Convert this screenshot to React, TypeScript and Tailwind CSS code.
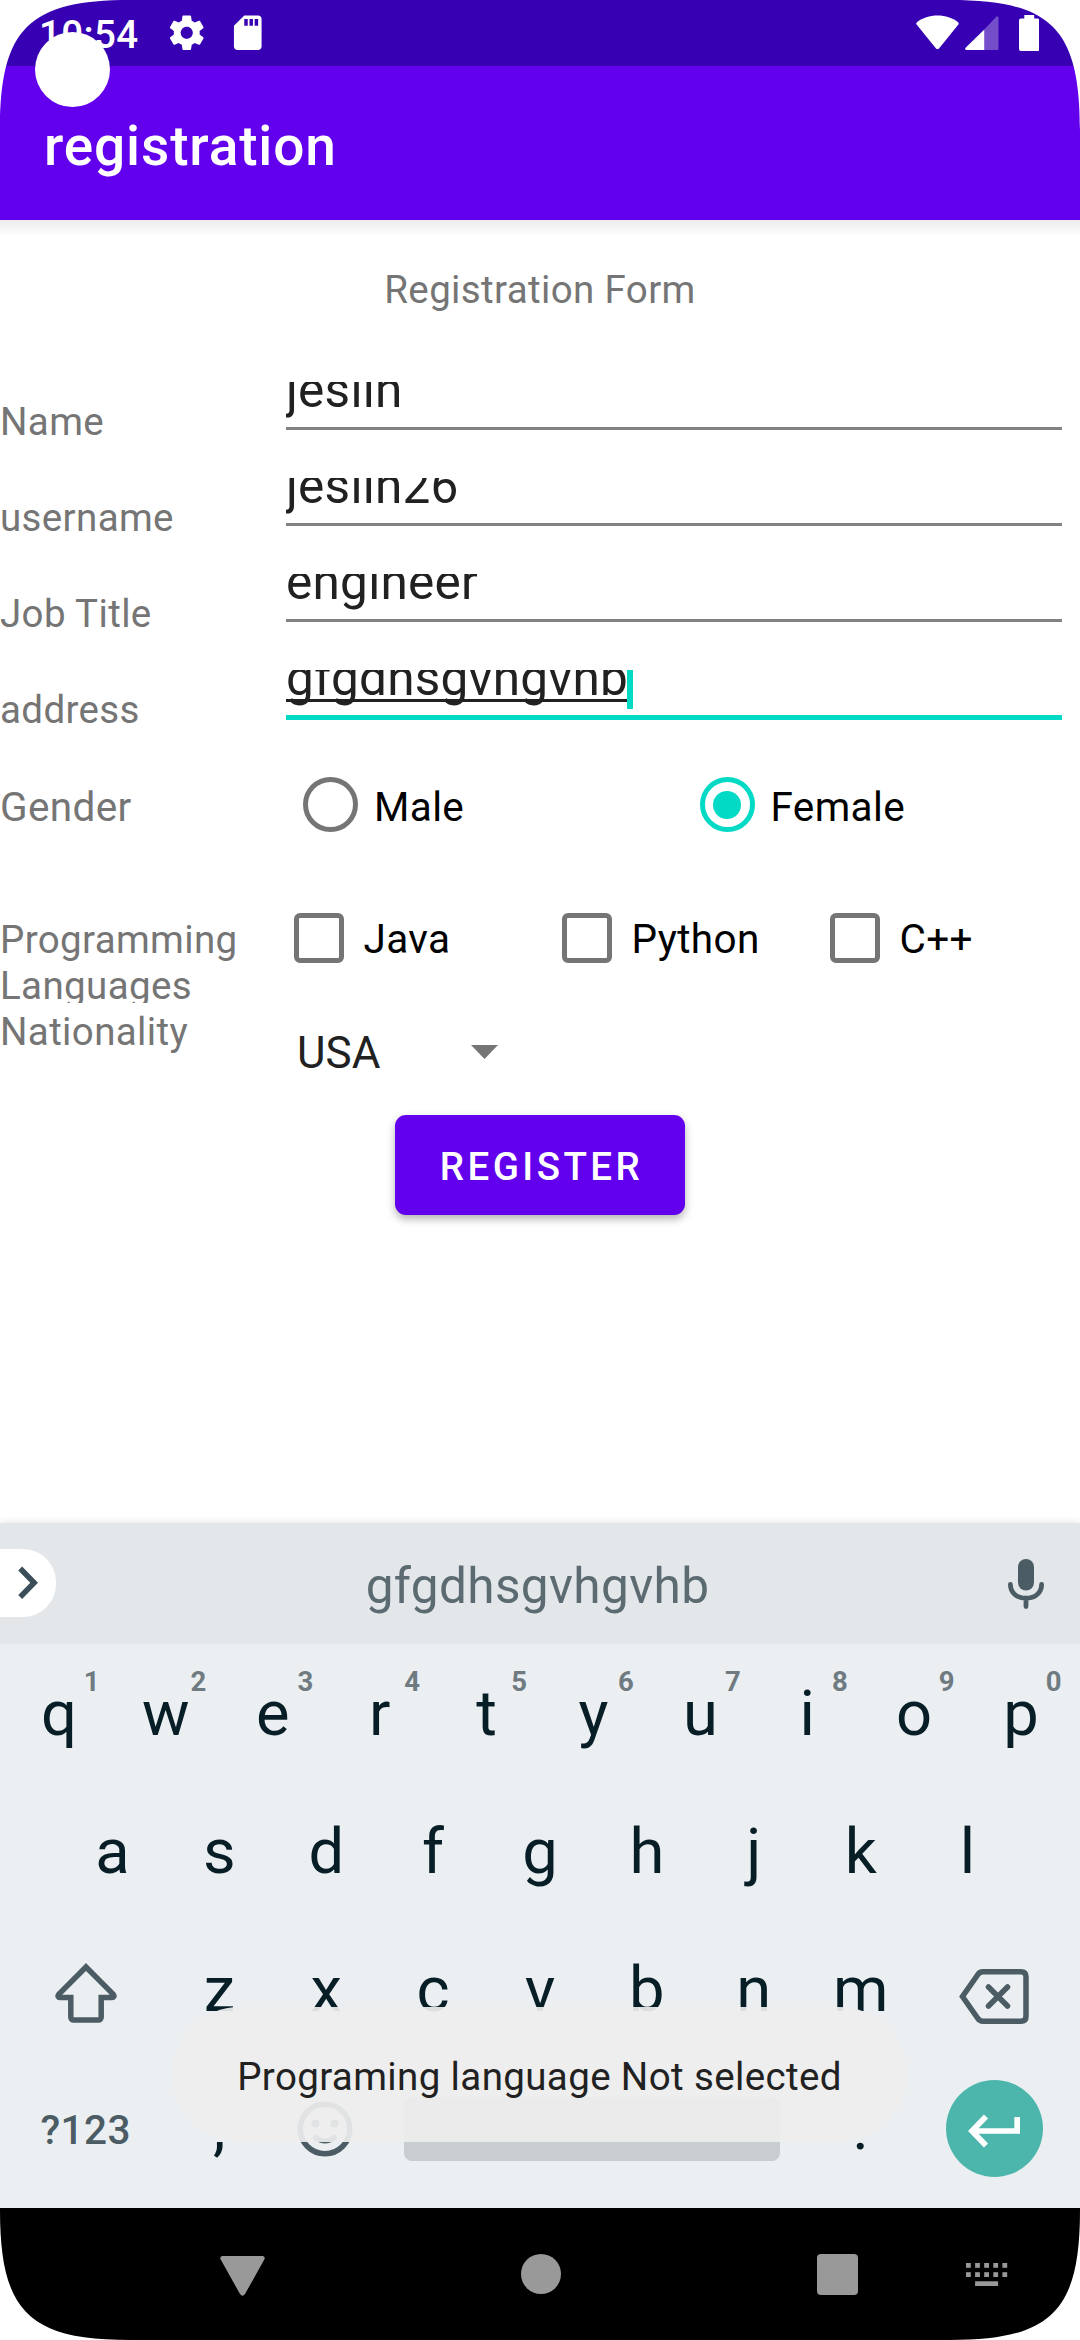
import React from "react";

function Corner({ className }: { className: string }) {
  return (
    <svg viewBox="0 0 130 130" className={"pointer-events-none absolute z-30 h-[130px] w-[130px] " + className}>
      <path d="M0 0V130C0 28.7 28.7 0 130 0Z" fill="#fff" />
    </svg>
  );
}

function StatusBar() {
  return (
    <header className="flex h-[66px] shrink-0 items-center bg-[#3700b3] text-white">
      <span className="mt-[3px] ml-[39px] w-[127px] text-[38.5px] leading-[46px] font-medium">10:54</span>
      <svg viewBox="0 0 24 24" className="h-[41.5px] w-[41.5px]" fill="currentColor">
        <path d="M19.43 12.98c.04-.32.07-.64.07-.98s-.03-.66-.07-.98l2.11-1.65c.19-.15.24-.42.12-.64l-2-3.46c-.12-.22-.39-.3-.61-.22l-2.49 1c-.52-.4-1.08-.73-1.69-.98l-.38-2.65C14.46 2.18 14.25 2 14 2h-4c-.25 0-.46.18-.49.42l-.38 2.65c-.61.25-1.17.59-1.69.98l-2.49-1c-.23-.09-.49 0-.61.22l-2 3.46c-.13.22-.07.49.12.64l2.11 1.65c-.04.32-.07.65-.07.98s.03.66.07.98l-2.11 1.65c-.19.15-.24.42-.12.64l2 3.46c.12.22.39.3.61.22l2.49-1c.52.4 1.08.73 1.69.98l.38 2.65c.03.24.24.42.49.42h4c.25 0 .46-.18.49-.42l.38-2.65c.61-.25 1.17-.59 1.69-.98l2.49 1c.23.09.49 0 .61-.22l2-3.46c.12-.22.07-.49-.12-.64l-2.11-1.65zM12 15.5c-1.93 0-3.5-1.57-3.5-3.5s1.57-3.5 3.5-3.5 3.5 1.57 3.5 3.5-1.57 3.5-3.5 3.5z" />
      </svg>
      <svg viewBox="0 0 24 24" className="ml-[19px] h-[41.5px] w-[41.5px]" fill="currentColor">
        <path d="M18 2h-8L4.02 8 4 20c0 1.1.9 2 2 2h12c1.1 0 2-.9 2-2V4c0-1.1-.9-2-2-2zm-6 6h-2V4h2v4zm3 0h-2V4h2v4zm3 0h-2V4h2v4z" />
      </svg>
      <div className="mr-[41px] ml-auto flex items-center">
        <svg viewBox="0 0 43 36" className="h-[36px] w-[43px]" fill="currentColor">
          <path d="M21.5 0.5C13.5 0.5 6.5 3 1.2 7C0.2 7.8 0 8.8 0.8 9.8L19.8 33.2C20.8 34.4 22.2 34.4 23.2 33.2L42.2 9.8C43 8.8 42.8 7.8 41.8 7C36.5 3 29.5 0.5 21.5 0.5Z" />
        </svg>
        <svg viewBox="0 0 34 36" className="ml-[5.5px] h-[36px] w-[34px]" fill="currentColor">
          <path d="M19.3 14.5V35H1.5C0 35 -0.3 33.6 0.6 32.7Z" />
          <path d="M19.3 14.5V35H32C33 35 33.5 34.5 33.5 33.5V3C33.5 1.6 31.9 1.2 31 2.1Z" opacity=".3" />
        </svg>
        <svg viewBox="0 0 20.5 36" className="ml-[20px] h-[36px] w-[20.5px]" fill="currentColor">
          <path d="M5.3 0H15.2V3.6H18.5Q20.5 3.6 20.5 5.6V34Q20.5 36 18.5 36H2Q0 36 0 34V5.6Q0 3.6 2 3.6H5.3Z" />
        </svg>
      </div>
    </header>
  );
}

const fields = [
  { label: "Name", value: "jeslin", active: false },
  { label: "username", value: "jeslin26", active: false },
  { label: "Job Title", value: "engineer", active: false },
  { label: "address", value: "gfgdhsgvhgvhb", active: true },
];

function Field({ label, value, active }: { label: string; value: string; active: boolean }) {
  return (
    <div className="flex h-[96px] items-start">
      <span className="mt-[17px] w-[286px] shrink-0 text-[38.5px] leading-[46px] text-[#757575]">{label}</span>
      <div className={"w-[776px] " + (active ? "border-b-[5px] border-[#03dac5]" : "border-b-[3px] border-[#828282]")}>
        <div className="flex h-[45px] overflow-hidden text-[49.5px] leading-[58px] tracking-[0.25px] text-[#212121]">
          <span
            className={
              "-mt-[21px] block h-[58px] " +
              (active ? "underline decoration-[#212121] decoration-[2.75px] underline-offset-[4px] [text-decoration-skip-ink:none]" : "")
            }
          >
            {value}
          </span>
          {active && <span className="-ml-px h-[39px] w-[6px] bg-[#03dac5]" />}
        </div>
      </div>
    </div>
  );
}

function Radio({ label, checked }: { label: string; checked?: boolean }) {
  return (
    <label className="flex w-[396.5px] shrink-0 items-center">
      <span
        className={
          "flex h-[55px] w-[55px] shrink-0 items-center justify-center rounded-full border-[5.5px] " +
          (checked ? "border-[#03dac5]" : "border-[#757575]")
        }
      >
        {checked && <span className="h-[28px] w-[28px] rounded-full bg-[#03dac5]" />}
      </span>
      <span className="mt-[4px] ml-[16px] text-[40.5px] leading-[48px] text-black">{label}</span>
    </label>
  );
}

function Check({ label }: { label: string }) {
  return (
    <label className="flex w-[268px] shrink-0 items-center">
      <span className="h-[50px] w-[50px] shrink-0 rounded-[6px] border-[5.5px] border-[#757575]" />
      <span className="mt-[3px] ml-[19.5px] text-[40.5px] leading-[48px] text-black">{label}</span>
    </label>
  );
}

function Form() {
  return (
    <main className="h-[1303px] shrink-0 overflow-hidden bg-white">
      <div className="h-4 bg-gradient-to-b from-[#ececec] to-white" />
      <h2 className="mt-[31px] h-[115px] text-center text-[38.5px] leading-[46px] text-[#757575]">Registration Form</h2>
      {fields.map((f) => (
        <Field key={f.label} {...f} />
      ))}
      <div className="flex h-[100px] items-start">
        <span className="mt-[17px] w-[303px] shrink-0 text-[40.5px] leading-[48px] text-[#757575]">Gender</span>
        <div className="mt-[11px] flex">
          <Radio label="Male" />
          <Radio label="Female" checked />
        </div>
      </div>
      <div className="flex h-[137px] items-start overflow-hidden">
        <span className="mt-[51px] w-[294px] shrink-0 text-[38.5px] leading-[46px] text-[#757575]">
          Programming
          <br />
          Languages
        </span>
        <div className="mt-[46px] flex">
          <Check label="Java" />
          <Check label="Python" />
          <Check label="C++" />
        </div>
      </div>
      <div className="flex h-[112px] items-start">
        <span className="mt-[6px] w-[297px] shrink-0 text-[38.5px] leading-[46px] text-[#757575]">Nationality</span>
        <span className="mt-[24px] w-[174px] shrink-0 text-[44px] leading-[52px] tracking-normal text-[#212121]">USA</span>
        <svg viewBox="0 0 27 14" className="mt-[42px] h-[14px] w-[27px]">
          <path d="M0 0H27L13.5 14Z" fill="#757575" />
        </svg>
      </div>
      <button className="mx-auto block h-[100px] w-[290px] rounded-[11px] bg-[#6200ee] pl-[3px] text-center text-[38.5px] leading-[103px] font-medium tracking-[3.44px] text-white shadow-[0_4px_8px_rgba(0,0,0,0.3)]">
        REGISTER
      </button>
    </main>
  );
}

function Key({ ch, hint }: { ch: string; hint?: string }) {
  return (
    <div className="relative w-[106.9px] text-center text-[63.25px] leading-[138px] tracking-normal text-[#071e27]">
      {ch}
      {hint && (
        <span className="absolute top-[22px] left-[70px] w-[32px] text-center text-[27.5px] leading-[32px] font-bold text-[#6f7b81]">
          {hint}
        </span>
      )}
    </div>
  );
}

function Keyboard() {
  return (
    <section className="relative z-10 h-[685px] shrink-0 bg-[#ebeff2] shadow-[0_-2px_6px_rgba(0,0,0,0.08)]">
      <div className="flex h-[121px] items-center bg-[#e3e7ea]">
        <div className="-mt-[2px] flex h-[68px] w-[56px] items-center rounded-r-[33px] bg-white">
          <svg viewBox="0 0 20 34" className="ml-[18px] h-[34px] w-[20px]" fill="none" stroke="#3c4e57" strokeWidth="5.5">
            <path d="M2.2 2.5L16.2 16.7L2.2 31" />
          </svg>
        </div>
        <span className="mt-[5px] flex-1 pr-[29px] pl-[40px] text-center text-[49.5px] leading-[58px] text-[#5c6b72]">gfgdhsgvhgvhb</span>
        <svg viewBox="0 0 36 50" className="mr-[36px] h-[50px] w-[36px]" fill="none" stroke="#4c5c64">
          <rect x="10" y="0" width="16" height="31.5" rx="8" fill="#4c5c64" stroke="none" />
          <path d="M2.4 25.5C2.4 33.8 9 39.2 18 39.2S33.6 33.8 33.6 25.5M18 39V47.5" strokeWidth="4.8" strokeLinecap="round" />
        </svg>
      </div>
      <div className="flex justify-center">
        {"qwertyuiop".split("").map((c, i) => (
          <Key key={c} ch={c} hint={String((i + 1) % 10)} />
        ))}
      </div>
      <div className="flex justify-center">
        {"asdfghjkl".split("").map((c) => (
          <Key key={c} ch={c} />
        ))}
      </div>
      <div className="flex justify-center">
        <div className="flex w-[160.4px] items-center justify-center pt-[8px]">
          <svg viewBox="0 0 62 60" className="h-[60px] w-[62px]" fill="none" stroke="#4c5c64" strokeWidth="5.5">
            <path d="M31 4L58 31C60 33.5 58.5 34.5 57 34.5H46.2V54C46.2 56 45 57 43.5 57H18.5C17 57 15.8 56 15.8 54V34.5H5C3.5 34.5 2 33.5 4 31Z" />
          </svg>
        </div>
        {"zxcvbnm".split("").map((c) => (
          <Key key={c} ch={c} />
        ))}
        <div className="flex w-[160.4px] items-center justify-center pt-[14px]">
          <svg viewBox="0 0 70 55" className="h-[55px] w-[70px]" fill="none" stroke="#4c5c64" strokeWidth="5.5">
            <path d="M24 2.8H62Q67 2.8 67 7.8V47.2Q67 52.2 62 52.2H24Q20.5 52.2 18.5 49L3.5 27.5L18.5 6Q20.5 2.8 24 2.8Z" />
            <path d="M29.5 18L48.5 37M48.5 18L29.5 37" strokeLinecap="round" />
          </svg>
        </div>
      </div>
      <div className="flex h-[138px] justify-center">
        <div className="w-[160.4px] pt-[3px] text-center text-[40.5px] leading-[138px] font-medium text-[#4c5c64]">?123</div>
        <Key ch="," />
        <div className="flex w-[106.9px] items-center justify-center pt-[4px] pr-[2px]">
          <svg viewBox="0 0 56 56" className="h-[56px] w-[56px]" fill="none" stroke="#4c5c64" strokeWidth="5.5">
            <circle cx="28" cy="28" r="24.8" />
            <circle cx="18.5" cy="22.5" r="4" fill="#4c5c64" stroke="none" />
            <circle cx="37.5" cy="22.5" r="4" fill="#4c5c64" stroke="none" />
            <path d="M18.5 36.5Q28 43.5 37.5 36.5" strokeLinecap="round" strokeWidth="5" />
          </svg>
        </div>
        <div className="flex w-[427.6px] items-center justify-center pt-[4px] pr-[2px]">
          <div className="h-[64px] w-[376px] rounded-[8px] bg-[#c8cdd0]" />
        </div>
        <Key ch="." />
        <div className="flex w-[160.4px] items-center justify-center pt-[3px]">
          <div className="flex h-[97px] w-[97px] items-center justify-center rounded-full bg-[#4db6ac]">
            <svg viewBox="0 0 52 34" className="mt-[4px] h-[34px] w-[52px]" fill="none" stroke="#fff" strokeWidth="5.7">
              <path d="M18 2.5L4 17L18 31.5M5 17H49.2V3" />
            </svg>
          </div>
        </div>
      </div>
    </section>
  );
}

function NavBar() {
  return (
    <nav className="relative z-10 flex h-[132px] shrink-0 items-center bg-black">
      <svg viewBox="0 0 45 40" className="mt-[4px] ml-[220px] h-[40px] w-[45px]" fill="#999">
        <path d="M2.5 0H42.5C44.5 0 45.2 2 44.3 3.6L25 38Q22.5 41.5 20 38L0.7 3.6C-0.2 2 0.5 0 2.5 0Z" />
      </svg>
      <div className="ml-[256px] h-[39.5px] w-[39.5px] rounded-full bg-[#999]" />
      <div className="ml-[256.5px] h-[41px] w-[41px] rounded-[4px] bg-[#999]" />
      <svg viewBox="0 0 42 23" className="ml-[108px] h-[23px] w-[42px]" fill="#999">
        {[0, 9.1, 18.2, 27.3, 36.4].map((x) => (
          <g key={x}>
            <rect x={x} y="0" width="4.8" height="4.8" />
            <rect x={x} y="9.2" width="4.8" height="4.8" />
          </g>
        ))}
        <rect x="9.1" y="18.3" width="23" height="4.7" />
      </svg>
    </nav>
  );
}

export default function App() {
  return (
    <div className="relative flex h-[2340px] w-[1080px] flex-col overflow-hidden bg-white font-['Roboto',sans-serif] tracking-[0.37px]">
      <StatusBar />
      <div className="flex h-[154px] shrink-0 items-center bg-[#6200ee] pt-[5px] pl-[44px] text-[55px] leading-[64px] font-medium tracking-[0.85px] text-white">
        registration
      </div>
      <Form />
      <Keyboard />
      <NavBar />
      <div className="absolute top-[2007px] left-[172px] z-20 h-[135px] w-[735px] rounded-full bg-[#eeeeee]/92 text-center text-[38.5px] leading-[139px] text-[#212121]">
        Programing language Not selected
      </div>
      <div className="absolute top-[32px] left-[35px] z-30 h-[75px] w-[75px] rounded-full bg-white" />
      <Corner className="top-0 left-0" />
      <Corner className="top-0 right-0 rotate-90" />
      <Corner className="right-0 bottom-0 rotate-180" />
      <Corner className="bottom-0 left-0 -rotate-90" />
    </div>
  );
}
